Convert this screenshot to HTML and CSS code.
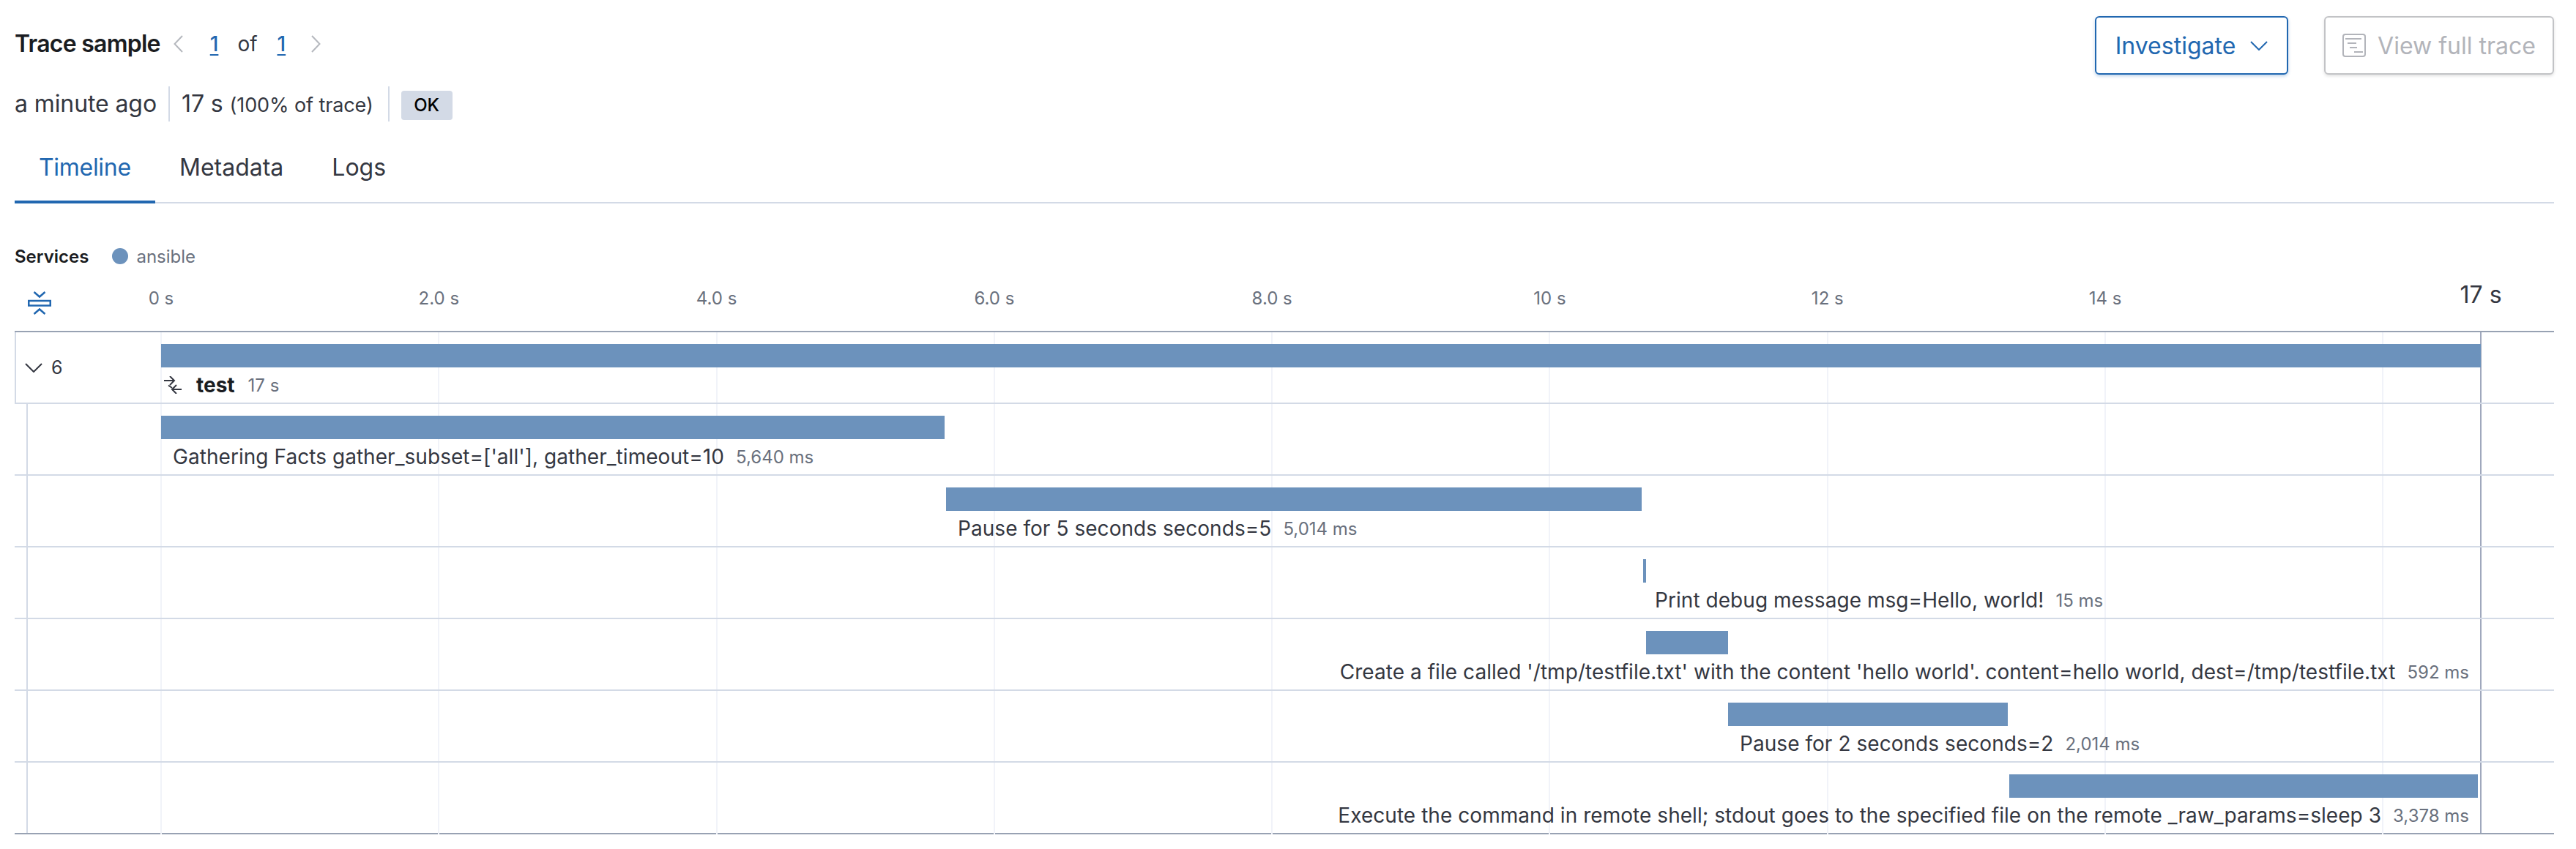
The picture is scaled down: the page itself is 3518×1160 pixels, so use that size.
FILE: index.html
```html
<!DOCTYPE html>
<html lang="en">
<head>
<meta charset="utf-8">
<title>Trace sample</title>
<link rel="stylesheet" href="styles.css">
</head>
<body>
<main class="page">
  <header class="head">
    <div class="head-left">
      <div class="title-line">
        <h1 class="title">Trace sample</h1>
        <svg class="pager-chevron" viewBox="0 0 13 24"><path d="M12 1 1.500 12 12 23"/></svg>
        <a class="pager-link">1</a>
        <span class="pager-of">of</span>
        <a class="pager-link">1</a>
        <svg class="pager-chevron pager-next" viewBox="0 0 13 24"><path d="M1 1l10.500 11L1 23"/></svg>
      </div>
      <div class="meta-line">
        <span class="meta-item">a minute ago</span>
        <span class="meta-item meta-duration">17 s <small class="meta-small">(100% of trace)</small></span>
        <span class="badge">OK</span>
      </div>
    </div>
    <div class="actions">
      <button class="btn btn-primary">Investigate
        <svg class="btn-chevron" viewBox="0 0 24 13"><path d="M1 1l11 11L23 1"/></svg>
      </button>
      <button class="btn btn-disabled">
        <svg class="btn-doc" viewBox="0 0 32 32"><rect x="1" y="1" width="30" height="30" rx="3"/><path d="M4 7h22M7 13h12M10 19h10M16 25h12"/></svg>
        View full trace
      </button>
    </div>
  </header>

  <nav class="tabs">
    <a class="tab tab-active">Timeline</a>
    <a class="tab">Metadata</a>
    <a class="tab">Logs</a>
  </nav>

  <div class="legend">
    <strong class="legend-title">Services</strong>
    <span class="legend-dot"></span>
    <span class="legend-name">ansible</span>
  </div>

  <div class="axis">
    <div class="axis-gutter">
      <svg class="collapse-icon" viewBox="0 0 32 32"><path class="ci-stroke" d="M8.500 1l7.500 6.500L23.500 1M8.500 31l7.500-6.500 7.500 6.500"/><rect class="ci-stroke" x="1.250" y="13" width="29.500" height="6.500"/></svg>
    </div>
    <div class="ticks">
      <span class="tick"><span class="tick-label">0 s</span></span>
      <span class="tick"><span class="tick-label">2.0 s</span></span>
      <span class="tick"><span class="tick-label">4.0 s</span></span>
      <span class="tick"><span class="tick-label">6.0 s</span></span>
      <span class="tick"><span class="tick-label">8.0 s</span></span>
      <span class="tick"><span class="tick-label">10 s</span></span>
      <span class="tick"><span class="tick-label">12 s</span></span>
      <span class="tick tick-long"><span class="tick-label">14 s</span></span>
      <span class="tick tick-end"><span class="tick-label tick-total">17 s</span></span>
    </div>
  </div>

  <section class="waterfall">
    <div class="gridlines">
      <i class="gridline"></i><i class="gridline"></i><i class="gridline"></i><i class="gridline"></i><i class="gridline"></i><i class="gridline"></i><i class="gridline"></i><i class="gridline"></i><i class="gridline"></i>
    </div>
    <div class="end-marker"></div>

    <div class="row row-root">
      <div class="gutter">
        <svg class="toggle" viewBox="0 0 24 13"><path d="M1 1l11 11L23 1"/></svg>
        <span class="toggle-count">6</span>
      </div>
      <div class="track">
        <div class="bar" style="margin-left:0;width:3168px"></div>
        <div class="label root-label">
          <svg class="merge-icon" viewBox="0 0 24 24"><path d="M0 6h14M8 0l6 6-6 6M24 18H11M17 12l-6 6 6 6M6 12.500l5 3.500"/></svg>
          <span class="root-name">test</span><span class="dur">17 s</span>
        </div>
      </div>
    </div>

    <div class="children">
      <div class="row">
        <div class="gutter"></div>
        <div class="track">
          <div class="bar" style="margin-left:0;width:1070px"></div>
          <div class="label" style="margin-left:16px"><span class="name">Gathering Facts gather_subset=['all'], gather_timeout=10</span><span class="dur">5,640 ms</span></div>
        </div>
      </div>
      <div class="row">
        <div class="gutter"></div>
        <div class="track">
          <div class="bar" style="margin-left:1072px;width:950px"></div>
          <div class="label" style="margin-left:1088px"><span class="name">Pause for 5 seconds seconds=5</span><span class="dur">5,014 ms</span></div>
        </div>
      </div>
      <div class="row">
        <div class="gutter"></div>
        <div class="track">
          <div class="bar" style="margin-left:2024px;width:4px"></div>
          <div class="label" style="margin-left:2040px"><span class="name">Print debug message msg=Hello, world!</span><span class="dur">15 ms</span></div>
        </div>
      </div>
      <div class="row">
        <div class="gutter"></div>
        <div class="track">
          <div class="bar" style="margin-left:2028px;width:112px"></div>
          <div class="label label-end"><span class="name">Create a file called '/tmp/testfile.txt' with the content 'hello world'. content=hello world, dest=/tmp/testfile.txt</span><span class="dur">592 ms</span></div>
        </div>
      </div>
      <div class="row">
        <div class="gutter"></div>
        <div class="track">
          <div class="bar" style="margin-left:2140px;width:382px"></div>
          <div class="label" style="margin-left:2156px"><span class="name">Pause for 2 seconds seconds=2</span><span class="dur">2,014 ms</span></div>
        </div>
      </div>
      <div class="row row-last">
        <div class="gutter"></div>
        <div class="track">
          <div class="bar" style="margin-left:2524px;width:640px"></div>
          <div class="label label-end"><span class="name">Execute the command in remote shell; stdout goes to the specified file on the remote _raw_params=sleep 3</span><span class="dur">3,378 ms</span></div>
        </div>
      </div>
    </div>
  </section>
</main>
</body>
</html>
```
FILE: styles.css
```css
* { box-sizing: border-box; }
html, body { margin: 0; padding: 0; background: #fff; }
body { font-family: Inter, "Noto Sans", sans-serif; color: #343741; }
.page { padding: 22px 30px 0 20px; }

.head { display: flex; justify-content: space-between; align-items: flex-start; height: 118px; }
.head-left { display: flex; flex-direction: column; }
.title-line { display: flex; align-items: center; height: 80px; margin-top: -2px; }
.title { margin: 0; font-size: 32px; font-weight: 600; color: #1a1c21; line-height: 40px; letter-spacing: -0.75px; }
.pager-chevron { width: 13px; height: 24px; margin-left: 18px; fill: none; stroke: #b5b8be; stroke-width: 2; }
.pager-next { margin-left: 35px; }
.pager-link { margin-left: 37px; font-size: 28px; font-weight: 500; color: #2167b0; text-decoration: underline; text-underline-offset: 4px; }
.pager-of { margin-left: 26px; font-size: 28px; }
.pager-of + .pager-link { margin-left: 27px; }
.meta-line { display: flex; align-items: center; height: 48px; margin-top: 18px; }
.meta-item { font-size: 32px; line-height: 48px; height: 48px; letter-spacing: -0.1px; }
.meta-duration { margin-left: 16px; padding: 0 20px 0 16px; border-left: 2px solid #d3dae6; border-right: 2px solid #d3dae6; }
.meta-small { font-size: 27px; }
.badge { margin-left: 16px; margin-top: 4px; height: 40px; width: 70px; border-radius: 4px; background: #d3dae6; color: #000; font-size: 24px; font-weight: 500; line-height: 40px; text-align: center; }

.actions { display: flex; gap: 49px; }
.btn { display: flex; align-items: center; justify-content: center; height: 80px; border-radius: 6px; background: #fff; font-family: inherit; font-size: 32px; padding: 0; border: 2px solid; }
.btn-primary { width: 264px; gap: 20px; color: #2167b0; border-color: #2167b0; box-shadow: 0 2px 4px rgba(33, 103, 176, .3); }
.btn-disabled { width: 314px; gap: 16px; color: #b2b4ba; border-color: #c2c3c6; box-shadow: 0 2px 4px rgba(0, 0, 0, .12); }
.btn-chevron { width: 24px; height: 13px; fill: none; stroke: #2167b0; stroke-width: 2; }
.btn-doc { width: 32px; height: 32px; fill: none; stroke: #b2b4ba; stroke-width: 2; }

.tabs { display: flex; height: 98px; margin-top: 40px; border-bottom: 2px solid #d3dae6; }
.tab { padding: 0 33px; font-size: 32px; line-height: 98px; height: 98px; }
.tab-active { width: 192px; padding-right: 0; color: #2167b0; border-bottom: 4px solid #2167b0; letter-spacing: -0.3px; }

.legend { display: flex; align-items: center; height: 32px; margin-top: 56px; font-size: 24px; }
.legend-title { font-weight: 600; color: #1a1c21; }
.legend-dot { width: 22px; height: 22px; margin-left: 32px; border-radius: 50%; background: #6c92bc; }
.legend-name { margin-left: 11px; color: #69707d; }

.axis { display: flex; align-items: flex-start; height: 86px; }
.axis-gutter { flex: 0 0 200px; padding: 32px 0 0 18px; display: flex; }
.collapse-icon { width: 32px; height: 32px; fill: none; }
.ci-stroke { stroke: #2167b0; stroke-width: 2.500; fill: none; }
.ticks { display: flex; align-items: center; height: 82px; }
.tick { flex: 0 0 379.300px; display: block; }
.tick-long { flex-basis: 513px; }
.tick-end { flex-basis: auto; }
.tick-label { display: inline-block; transform: translateX(-50%); font-size: 24px; color: #69707d; white-space: nowrap; }
.tick-total { font-size: 32px; color: #343741; transform: translate(-50%, -5px); }

.waterfall { position: relative; border-top: 2px solid #98a2b3; border-bottom: 2px solid #98a2b3; }
.gridlines { position: absolute; top: 0; bottom: -2px; left: 199px; display: flex; }
.gridline { flex: 0 0 379.300px; border-left: 2px solid #f1f3f9; }
.gridline:last-child { flex-basis: 2px; }
.end-marker { position: absolute; top: 0; bottom: 0; left: 3367px; width: 2px; background: #a0a8bd; }

.row { position: relative; display: flex; height: 98px; border-bottom: 2px solid #d3dae6; }
.row-last { height: 96px; border-bottom: 0; }
.row-root { border-left: 2px solid #d3dae6; }
.gutter { flex: 0 0 200px; display: flex; align-items: center; }
.row-root .gutter { flex-basis: 198px; padding-left: 12px; }
.toggle { width: 24px; height: 13px; fill: none; stroke: #343741; stroke-width: 2; }
.toggle-count { margin-left: 12px; font-size: 25px; }
.track { flex: 1; display: flex; flex-direction: column; padding-top: 16px; padding-right: 116px; min-width: 0; }
.bar { height: 32px; flex: none; background: #6c92bc; }
.label { display: flex; align-items: center; height: 40px; margin-top: 4px; white-space: nowrap; }
.label-end { justify-content: flex-end; }
.name { font-size: 28px; color: #343741; letter-spacing: 0.05px; }
.dur { margin-left: 16px; font-size: 24px; color: #69707d; }
.root-label { margin-left: 4px; }
.merge-icon { width: 24px; height: 24px; fill: none; stroke: #343741; stroke-width: 2; }
.root-name { margin-left: 20px; font-size: 28px; font-weight: 700; color: #1a1c21; }
.root-name + .dur { margin-left: 18px; }

.children { position: relative; }
.children::before { content: ""; position: absolute; top: 0; bottom: 0; left: 16px; width: 2px; background: #d3dae6; }
```
